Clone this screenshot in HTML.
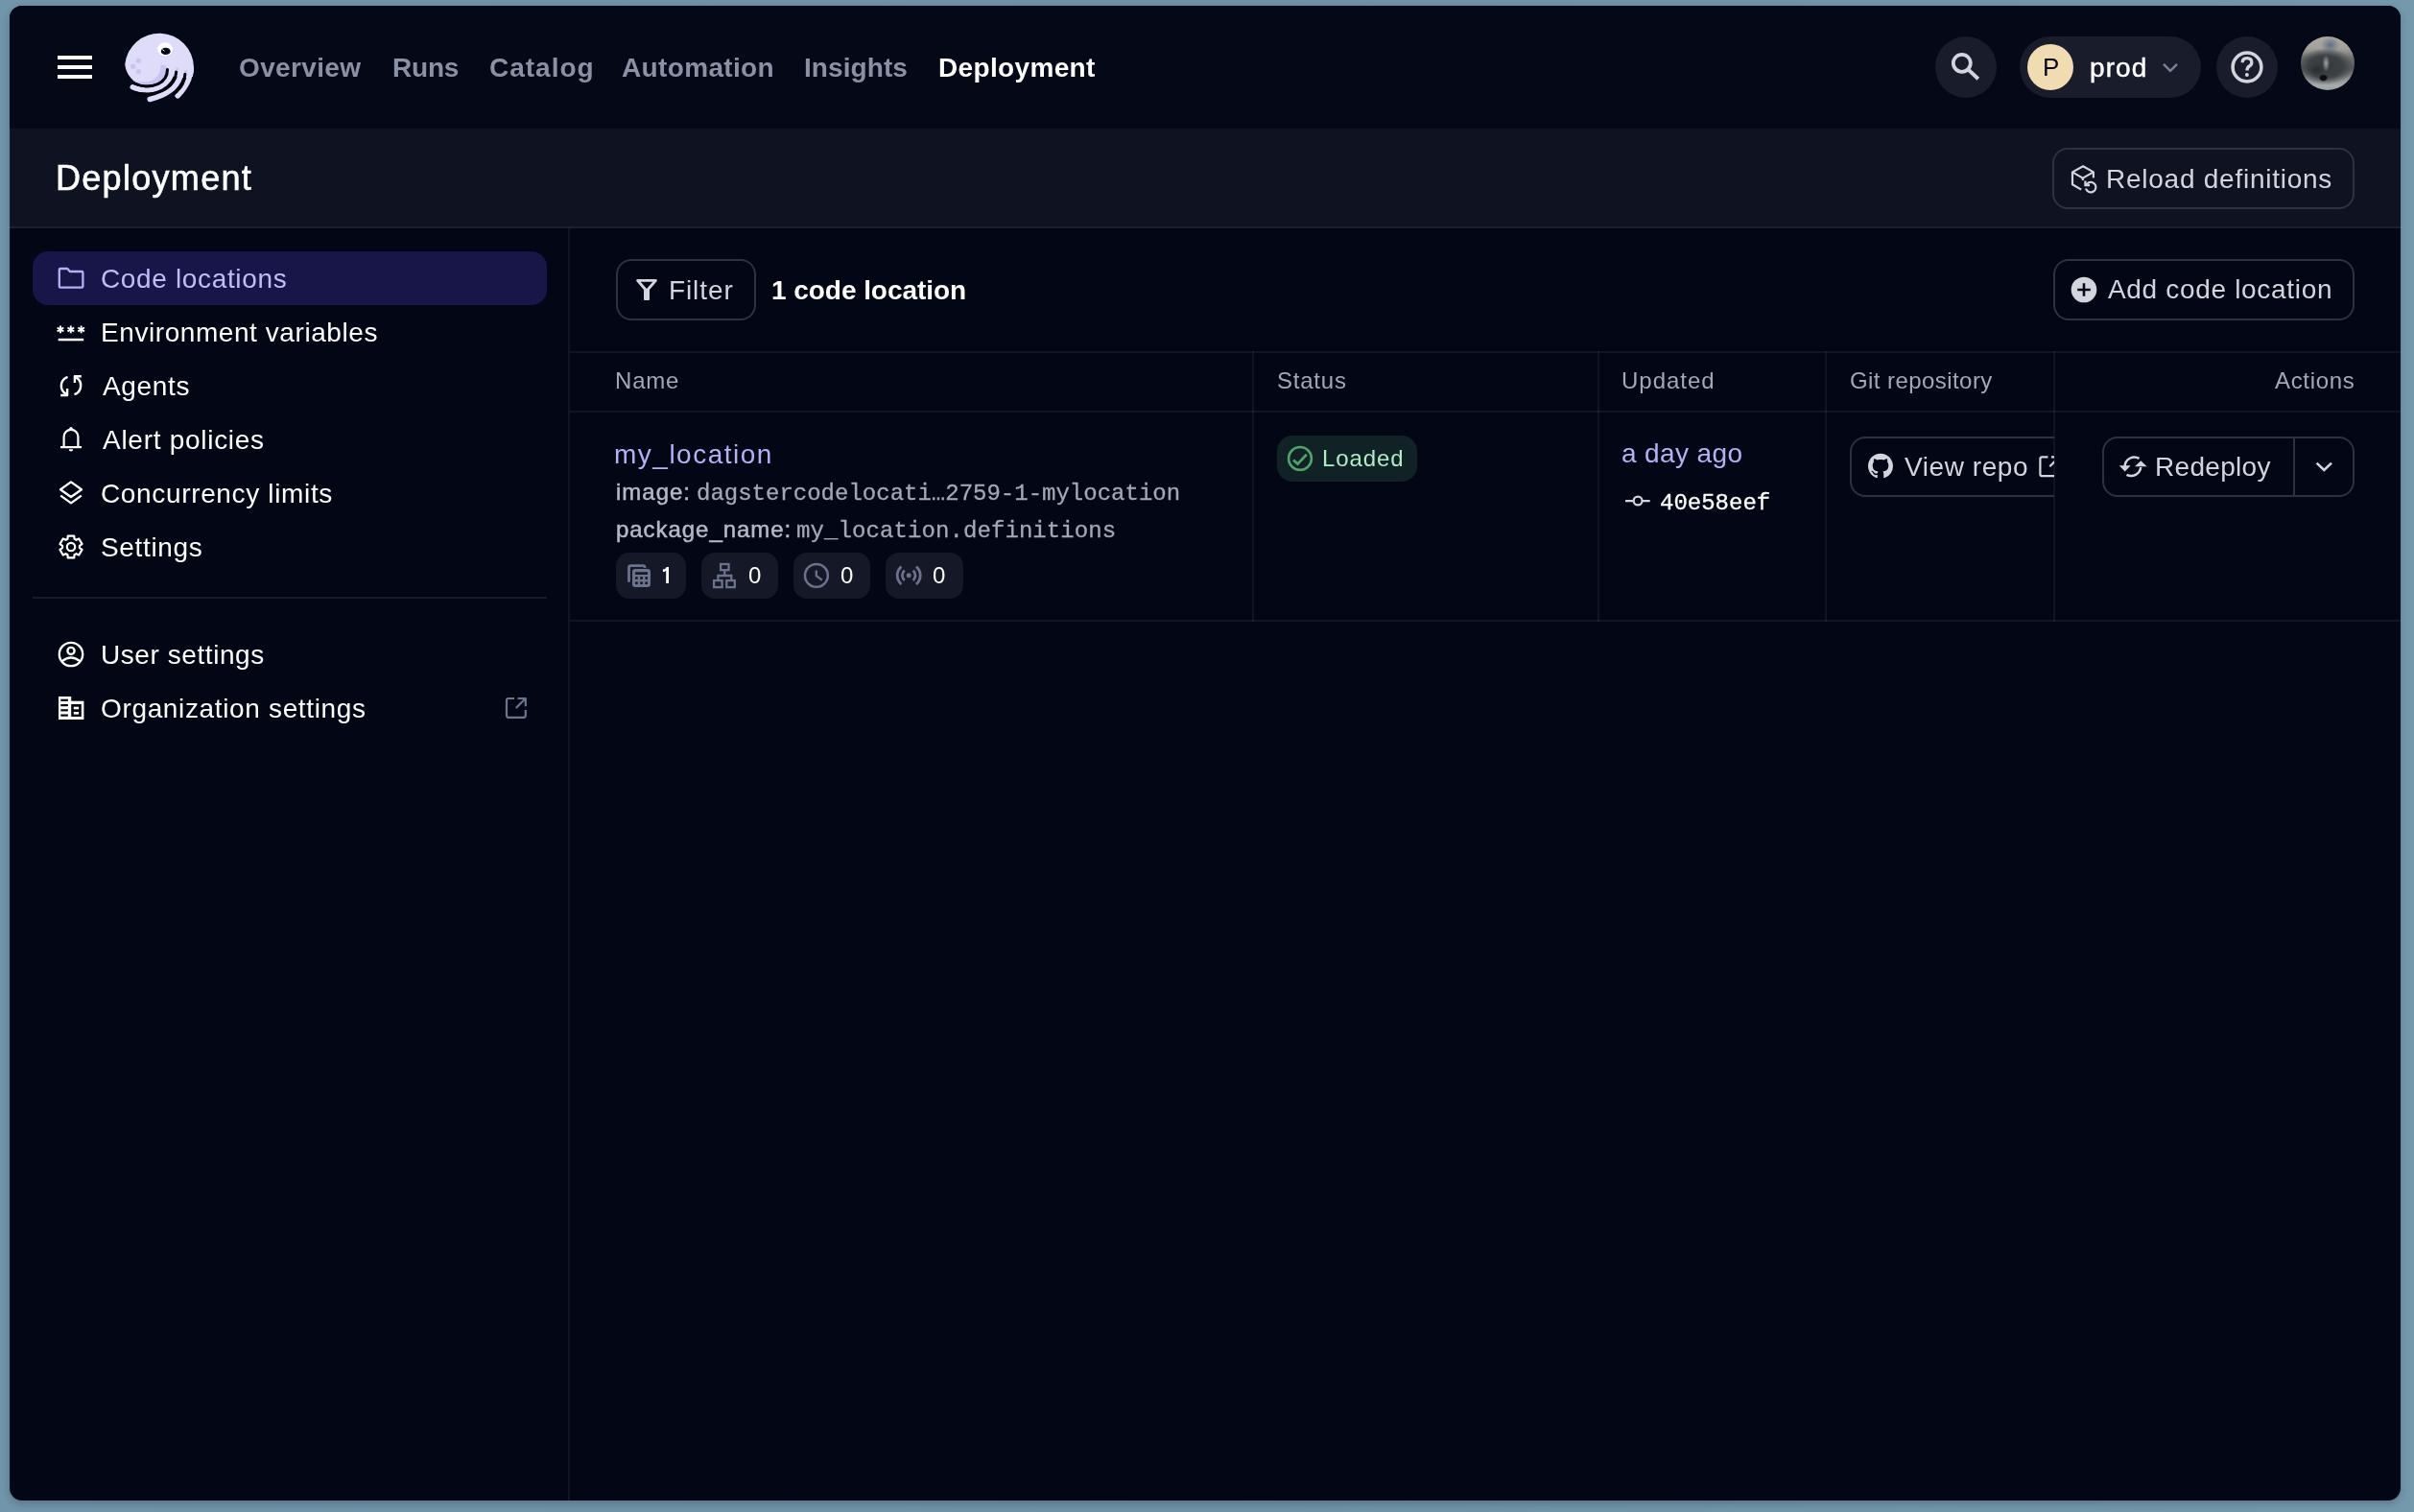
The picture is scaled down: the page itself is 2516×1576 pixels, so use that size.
<!DOCTYPE html>
<html><head><meta charset="utf-8">
<style>
*{box-sizing:border-box}
html,body{margin:0;padding:0}
body{-webkit-font-smoothing:antialiased;width:2516px;height:1576px;position:relative;overflow:hidden;background:linear-gradient(to right,#7195aa 0%,#6e92a6 50%,#7499ad 100%);font-family:"Liberation Sans",sans-serif;}
.a{position:absolute;white-space:pre;line-height:1;will-change:transform}
#win{position:absolute;left:10px;top:6px;width:2492px;height:1558px;border-radius:13px;overflow:hidden;background:#030614;box-shadow:0 3px 8px rgba(0,0,0,.22)}
#nav{position:absolute;left:0;top:0;width:2492px;height:128px;background:#050816}
#hdr{position:absolute;left:0;top:128px;width:2492px;height:104px;background:#0f1220;border-bottom:2px solid #1d1f2f}
#sbb{position:absolute;left:582px;top:232px;width:2px;height:1326px;background:#12141f}
.btn{position:absolute;border:2px solid #2c3144;border-radius:16px}
.hl{position:absolute;height:2px;background:rgba(200,210,255,.07)}
.vl{position:absolute;width:2px;background:rgba(200,210,255,.07)}
.tag{position:absolute;height:48px;border-radius:14px;background:#151826}
.ov{position:absolute;left:0;top:0}

</style></head>
<body>
<div id="win">
  <div id="nav"></div>
  <div id="hdr"></div>
  <div id="sbb"></div>
  <div class="a" style="left:0;top:128px;width:1px;height:1430px;background:rgba(200,210,255,.06)"></div>
  <div class="hl" style="left:584px;top:360px;width:1908px"></div>
  <div class="hl" style="left:584px;top:422px;width:1908px"></div>
  <div class="hl" style="left:584px;top:640px;width:1908px"></div>
  <div class="vl" style="left:1295px;top:360px;height:282px"></div>
  <div class="vl" style="left:1655px;top:360px;height:282px"></div>
  <div class="vl" style="left:1892px;top:360px;height:282px"></div>
  <div class="vl" style="left:2130px;top:360px;height:282px"></div>
</div>
<div class="a" style="left:60px;top:58px;width:36px;height:4px;background:#fff"></div>
<div class="a" style="left:60px;top:68px;width:36px;height:4px;background:#fff"></div>
<div class="a" style="left:60px;top:78px;width:36px;height:4px;background:#fff"></div>
<div class="a" style="left:249.0px;top:56.8px;font-size:28px;color:#8a91a5;font-weight:700;font-family:'Liberation Sans',sans-serif;letter-spacing:0.35px;">Overview</div>
<div class="a" style="left:409.0px;top:56.8px;font-size:28px;color:#8a91a5;font-weight:700;font-family:'Liberation Sans',sans-serif;letter-spacing:-0.2px;">Runs</div>
<div class="a" style="left:510.0px;top:56.8px;font-size:28px;color:#8a91a5;font-weight:700;font-family:'Liberation Sans',sans-serif;letter-spacing:1.0px;">Catalog</div>
<div class="a" style="left:648.0px;top:56.8px;font-size:28px;color:#8a91a5;font-weight:700;font-family:'Liberation Sans',sans-serif;letter-spacing:0.35px;">Automation</div>
<div class="a" style="left:838.0px;top:56.8px;font-size:28px;color:#8a91a5;font-weight:700;font-family:'Liberation Sans',sans-serif;letter-spacing:0.08px;">Insights</div>
<div class="a" style="left:978.3px;top:56.8px;font-size:28px;color:#fff;font-weight:700;font-family:'Liberation Sans',sans-serif;letter-spacing:0.35px;">Deployment</div>
<div class="a" style="left:58.3px;top:167.8px;font-size:36px;color:#fff;font-weight:400;font-family:'Liberation Sans',sans-serif;letter-spacing:1.3px;-webkit-text-stroke:0.6px #fff;">Deployment</div>
<div class="a" style="left:34px;top:262px;width:536px;height:56px;border-radius:16px;background:#181548"></div>
<div class="a" style="left:105.0px;top:276.6px;font-size:28px;color:#c0bcf7;font-weight:400;font-family:'Liberation Sans',sans-serif;letter-spacing:0.65px;">Code locations</div>
<div class="a" style="left:105.0px;top:332.7px;font-size:28px;color:#fff;font-weight:400;font-family:'Liberation Sans',sans-serif;letter-spacing:0.57px;">Environment variables</div>
<div class="a" style="left:106.5px;top:388.6px;font-size:28px;color:#fff;font-weight:400;font-family:'Liberation Sans',sans-serif;letter-spacing:0.65px;">Agents</div>
<div class="a" style="left:106.5px;top:444.6px;font-size:28px;color:#fff;font-weight:400;font-family:'Liberation Sans',sans-serif;letter-spacing:0.72px;">Alert policies</div>
<div class="a" style="left:105.0px;top:500.6px;font-size:28px;color:#fff;font-weight:400;font-family:'Liberation Sans',sans-serif;letter-spacing:0.65px;">Concurrency limits</div>
<div class="a" style="left:105.0px;top:556.6px;font-size:28px;color:#fff;font-weight:400;font-family:'Liberation Sans',sans-serif;letter-spacing:0.65px;">Settings</div>
<div class="a" style="left:105.0px;top:669.0px;font-size:28px;color:#fff;font-weight:400;font-family:'Liberation Sans',sans-serif;letter-spacing:0.57px;">User settings</div>
<div class="a" style="left:105.0px;top:724.9px;font-size:28px;color:#fff;font-weight:400;font-family:'Liberation Sans',sans-serif;letter-spacing:0.65px;">Organization settings</div>
<div class="a" style="left:34px;top:622px;width:536px;height:2px;background:#181b29"></div>
<div class="btn" style="left:2139px;top:154px;width:315px;height:64px"></div>
<div class="a" style="left:2195.0px;top:172.6px;font-size:28px;color:#d3d5de;font-weight:400;font-family:'Liberation Sans',sans-serif;letter-spacing:0.75px;">Reload definitions</div>
<div class="btn" style="left:2140px;top:270px;width:314px;height:64px"></div>
<div class="a" style="left:2197.0px;top:288.1px;font-size:28px;color:#d3d5de;font-weight:400;font-family:'Liberation Sans',sans-serif;letter-spacing:0.68px;">Add code location</div>
<div class="btn" style="left:642px;top:270px;width:146px;height:64px"></div>
<div class="a" style="left:697.0px;top:288.9px;font-size:28px;color:#d3d5de;font-weight:400;font-family:'Liberation Sans',sans-serif;letter-spacing:0.9px;">Filter</div>
<div class="a" style="left:804.3px;top:288.9px;font-size:28px;color:#fff;font-weight:700;font-family:'Liberation Sans',sans-serif;letter-spacing:-0.05px;">1 code location</div>
<div class="a" style="left:641.0px;top:385.4px;font-size:24px;color:#a3a7b7;font-weight:400;font-family:'Liberation Sans',sans-serif;letter-spacing:0.8px;">Name</div>
<div class="a" style="left:1330.8px;top:385.4px;font-size:24px;color:#a3a7b7;font-weight:400;font-family:'Liberation Sans',sans-serif;letter-spacing:0.78px;">Status</div>
<div class="a" style="left:1689.5px;top:385.4px;font-size:24px;color:#a3a7b7;font-weight:400;font-family:'Liberation Sans',sans-serif;letter-spacing:0.98px;">Updated</div>
<div class="a" style="left:1928.0px;top:385.4px;font-size:24px;color:#a3a7b7;font-weight:400;font-family:'Liberation Sans',sans-serif;letter-spacing:0.43px;">Git repository</div>
<div class="a" style="left:2371.0px;top:385.4px;font-size:24px;color:#a3a7b7;font-weight:400;font-family:'Liberation Sans',sans-serif;letter-spacing:0.68px;">Actions</div>
<div class="a" style="left:640.0px;top:459.5px;font-size:28px;color:#b5b0f4;font-weight:400;font-family:'Liberation Sans',sans-serif;letter-spacing:1.5px;">my_location</div>
<div class="a" style="left:642.0px;top:500.9px;font-size:24px;color:#b6bac6;font-weight:400;font-family:'Liberation Sans',sans-serif;letter-spacing:1.0px;-webkit-text-stroke:0.5px #b6bac6;">image:</div>
<div class="a" style="left:726.0px;top:502.8px;font-size:24px;color:#a3a7b7;font-weight:400;font-family:'Liberation Mono',monospace;-webkit-text-stroke:0.3px #a3a7b7;">dagstercodelocati…2759-1-mylocation</div>
<div class="a" style="left:642.0px;top:540.3px;font-size:24px;color:#b6bac6;font-weight:400;font-family:'Liberation Sans',sans-serif;letter-spacing:0.95px;-webkit-text-stroke:0.5px #b6bac6;">package_name:</div>
<div class="a" style="left:830.0px;top:542.2px;font-size:24px;color:#a3a7b7;font-weight:400;font-family:'Liberation Mono',monospace;letter-spacing:0.09px;-webkit-text-stroke:0.3px #a3a7b7;">my_location.definitions</div>
<div class="tag" style="left:642px;top:576px;width:73px"></div>
<div class="tag" style="left:731px;top:576px;width:80px"></div>
<div class="tag" style="left:827px;top:576px;width:80px"></div>
<div class="tag" style="left:923px;top:576px;width:81px"></div>
<div class="a" style="left:779.5px;top:587.7px;font-size:24px;color:#fff;font-weight:400;font-family:'Liberation Sans',sans-serif;">0</div>
<div class="a" style="left:875.5px;top:587.7px;font-size:24px;color:#fff;font-weight:400;font-family:'Liberation Sans',sans-serif;">0</div>
<div class="a" style="left:971.5px;top:587.7px;font-size:24px;color:#fff;font-weight:400;font-family:'Liberation Sans',sans-serif;">0</div>
<div class="a" style="left:1331px;top:454px;width:146px;height:48px;border-radius:16px;background:#112226"></div>
<div class="a" style="left:1378.0px;top:466.3px;font-size:24px;color:#b1ebc4;font-weight:400;font-family:'Liberation Sans',sans-serif;letter-spacing:0.9px;">Loaded</div>
<div class="a" style="left:1689.6px;top:459.3px;font-size:28px;color:#b5b0f4;font-weight:400;font-family:'Liberation Sans',sans-serif;letter-spacing:0.37px;">a day ago</div>
<div class="a" style="left:1730.0px;top:512.9px;font-size:24px;color:#fff;font-weight:400;font-family:'Liberation Mono',monospace;-webkit-text-stroke:0.3px #fff;">40e58eef</div>
<div class="a" style="left:1904px;top:440px;width:237px;height:100px;overflow:hidden"><div class="btn" style="left:24px;top:15px;width:300px;height:63px"></div></div>
<div class="a" style="left:1985.4px;top:473.1px;font-size:28px;color:#d3d5de;font-weight:400;font-family:'Liberation Sans',sans-serif;letter-spacing:0.56px;">View repo</div>
<div class="btn" style="left:2191px;top:455px;width:263px;height:63px"></div>
<div class="a" style="left:2390px;top:457px;width:2px;height:59px;background:#2c3144"></div>
<div class="a" style="left:2246.0px;top:473.1px;font-size:28px;color:#d3d5de;font-weight:400;font-family:'Liberation Sans',sans-serif;letter-spacing:0.3px;">Redeploy</div>
<div class="a" style="left:2017px;top:38px;width:64px;height:64px;border-radius:32px;background:#191c2b"></div>
<div class="a" style="left:2105px;top:38px;width:189px;height:64px;border-radius:32px;background:#191c2b"></div>
<div class="a" style="left:2113px;top:46px;width:48px;height:48px;border-radius:24px;background:#f1dcb1"></div>
<div class="a" style="left:2129.0px;top:57.0px;font-size:26px;color:#030615;font-weight:400;font-family:'Liberation Sans',sans-serif;">P</div>
<div class="a" style="left:2177.6px;top:56.6px;font-size:28px;color:#fff;font-weight:400;font-family:'Liberation Sans',sans-serif;letter-spacing:1.1px;-webkit-text-stroke:0.45px #fff;">prod</div>
<div class="a" style="left:2310px;top:38px;width:64px;height:64px;border-radius:32px;background:#191c2b"></div>
<div class="a" style="left:2398px;top:38px;width:56px;height:56px;border-radius:28px;background:radial-gradient(ellipse 5px 4px at 42% 77%,#0b0c0d 0,#0b0c0d 55%,transparent 100%),radial-gradient(ellipse 4px 9px at 47% 50%,rgba(205,205,202,.7) 0,transparent 100%),radial-gradient(ellipse 10px 6px at 30% 62%,rgba(40,42,45,.9) 0,transparent 100%),radial-gradient(ellipse 30px 19px at 46% 56%,#36393c 0,#3e4144 60%,rgba(62,65,68,0) 100%),radial-gradient(ellipse 10px 9px at 55% 16%,rgba(80,105,130,.85) 0,transparent 100%),linear-gradient(to bottom,#aca9a2 0%,#a3a19b 22%,#6e7070 40%,#5a5c5e 60%,#8f9393 78%,#a6abab 92%,#9aa0a3 100%)"></div>
<svg class="ov" width="2516" height="1576" viewBox="0 0 2516 1576">
<defs><clipPath id="cv"><rect x="1900" y="440" width="241" height="100"/></clipPath></defs>

<g transform="translate(126,30)">
  <path d="M4.2,37 A36,36 0 0 1 76,40 L75.6,46 L48.2,41.6 C47.8,44.5 47,47.2 45.5,49.5 C42,54.5 36,58 29,58.4 C24,58.6 18.5,57.6 13.5,54.2 C8,50 4.8,43 4.2,37 Z" fill="#dedcf8"/>
  <path d="M47,39 L76,39.5 L75.8,45 L74.8,50 L71.5,51 L62,51 L52,49 L47,45 Z" fill="#dedcf8"/>
  <path d="M41.5,37.5 C46,36.8 49.5,39.5 48.2,44.5 C46,52 40,57.5 29,58.4 C22,58.8 16,57 12,53.5 C17,55 22,55.5 27,55 C36,54 41,49 41.5,37.5Z" fill="#c8c5f3"/>
  <g fill="none" stroke="#dedcf8" stroke-width="5.6" stroke-linecap="round">
    <path d="M12.3,60.8 C18,63.5 24,64.3 30,64.1 C38,63.7 46,58 50,52.5 C52.5,48.5 53.5,45.5 53.5,42"/>
    <path d="M30.2,73.4 C38,71.6 45,68.8 51,64.5 C56,61 60,55 62,49.5 C62.8,47 63,45 63.2,42"/>
    <path d="M59.2,69.8 C64.3,64.5 68.4,58.5 70.7,52.5 C71.9,49 72.5,45 72.7,40"/>
  </g>
  <g fill="none" stroke="#03040c" stroke-width="3" stroke-linecap="round">
    <path d="M48.5,42.6 C48.3,50 44,55 39,57.5 C35,59.3 30,59.9 26,59.9 C22,59.8 18,58.8 14,57"/>
    <path d="M57.7,44.9 C57.5,52 53,59 47,62.5 C42,65.5 35,67.5 28,68 C24,68.2 20,68 16,67"/>
    <path d="M66.9,47.2 C66.5,54 63.5,60.5 58.5,65 L55,68"/>
  </g>
  <circle cx="58.7" cy="41.8" r="1.5" fill="#c8c5f3"/>
  <circle cx="67.7" cy="44.4" r="1.5" fill="#c8c5f3"/>
  <ellipse cx="46" cy="21.3" rx="7.8" ry="7" fill="#fff"/>
  <ellipse cx="46.7" cy="23.4" rx="4.9" ry="3.7" fill="#050816"/>
  <path d="M43.4,21.6 L45.4,23.2" stroke="#fff" stroke-width="1"/>
  <circle cx="18.3" cy="33.3" r="2.6" fill="#c8c5f3"/>
  <circle cx="12.7" cy="39.2" r="2.6" fill="#c8c5f3"/>
  <circle cx="18.3" cy="44.7" r="2.6" fill="#c8c5f3"/>
</g>
<g fill="none" stroke-linecap="butt" stroke-linejoin="round">
<path d="M61.8,281.3 Q61.8,280 63.1,280 H70.3 L72.8,283 H85.1 Q86.4,283 86.4,284.3 V298.4 Q86.4,299.7 85.1,299.7 H63.1 Q61.8,299.7 61.8,298.4 Z" stroke="#b5b0f4" stroke-width="2.3"/>
<g stroke="#fff" stroke-width="2.4"><path d="M70.5,392.8 A9.8,9.8 0 0 0 68.8,410.6"/><path d="M63.2,412 H70.1 V405"/><path d="M77.5,411.2 A9.8,9.8 0 0 0 79.2,393.4"/><path d="M84.8,392.2 H77.9 V399"/></g>
<g stroke="#fff" stroke-width="2.2"><path d="M66.6,465 V455.2 A7.4,7.4 0 0 1 81.4,455.2 V465"/><path d="M63,466.1 H85"/></g><circle cx="74" cy="446.6" r="1.7" fill="#fff"/><path d="M71.8,468.2 A2.2,2.2 0 0 0 76.2,468.2 Z" fill="#fff"/>
<g stroke="#fff" stroke-width="2.3"><path d="M74,502.4 L85,510.2 L74,518 L63,510.2 Z"/><path d="M63.2,516.6 L74,524.4 L84.8,516.6"/></g>
<path d="M70.48,561.72 L70.72,558.56 L77.28,558.56 L77.52,561.72 L79.42,562.81 L82.27,561.44 L85.55,567.12 L82.93,568.90 L82.93,571.10 L85.55,572.88 L82.27,578.56 L79.42,577.19 L77.52,578.28 L77.28,581.44 L70.72,581.44 L70.48,578.28 L68.58,577.19 L65.73,578.56 L62.45,572.88 L65.07,571.10 L65.07,568.90 L62.45,567.12 L65.73,561.44 L68.58,562.81Z" stroke="#fff" stroke-width="2.2"/><circle cx="74" cy="570" r="4.2" stroke="#fff" stroke-width="2.2"/>
<g stroke="#fff" stroke-width="2.3"><circle cx="74" cy="682" r="12.2"/><circle cx="74" cy="678.4" r="3.6"/><path d="M64.8,689.2 Q74,681.8 83.2,689.2"/></g>
<g stroke="#6b7590" stroke-width="2.2"><path d="M536,728 H530 Q528,728 528,730 V745.8 Q528,747.8 530,747.8 H545.8 Q547.8,747.8 547.8,745.8 V740"/><path d="M539.5,728 H547.8 V736.3"/><path d="M547.8,728 L537.8,738"/></g>
</g>
<line x1="63.00" y1="339.50" x2="63.00" y2="347.30" stroke="#fff" stroke-width="1.9"/><line x1="59.62" y1="341.45" x2="66.38" y2="345.35" stroke="#fff" stroke-width="1.9"/><line x1="66.38" y1="341.45" x2="59.62" y2="345.35" stroke="#fff" stroke-width="1.9"/><line x1="73.80" y1="339.50" x2="73.80" y2="347.30" stroke="#fff" stroke-width="1.9"/><line x1="70.42" y1="341.45" x2="77.18" y2="345.35" stroke="#fff" stroke-width="1.9"/><line x1="77.18" y1="341.45" x2="70.42" y2="345.35" stroke="#fff" stroke-width="1.9"/><line x1="84.60" y1="339.50" x2="84.60" y2="347.30" stroke="#fff" stroke-width="1.9"/><line x1="81.22" y1="341.45" x2="87.98" y2="345.35" stroke="#fff" stroke-width="1.9"/><line x1="87.98" y1="341.45" x2="81.22" y2="345.35" stroke="#fff" stroke-width="1.9"/><rect x="60.7" y="352.8" width="26.5" height="2.5" fill="#fff"/>
<rect x="61" y="726" width="13.2" height="24" fill="#fff"/><rect x="73.8" y="730.7" width="13.6" height="19.3" fill="#fff"/><rect x="63.3" y="728.7" width="7.6" height="2.2" fill="#050816"/><rect x="63.3" y="734" width="7.6" height="2.2" fill="#050816"/><rect x="63.3" y="739.2" width="7.6" height="2.2" fill="#050816"/><rect x="63.3" y="744.5" width="7.6" height="2.2" fill="#050816"/><rect x="74.2" y="734" width="10.6" height="13" fill="#050816"/><rect x="76.8" y="736.7" width="5.3" height="2.6" fill="#fff"/><rect x="76.8" y="742" width="5.3" height="2.6" fill="#fff"/>
<g fill="none" stroke="#d3d5de" stroke-width="2.2" stroke-linejoin="round"><path d="M2160,179.4 L2171.1,173.3 L2181.9,179.4 L2170.8,185.6 Z"/><path d="M2160,179.4 V192.2 L2169.2,197.6"/><path d="M2181.9,179.4 V185.4"/><path d="M2170.8,185.6 V188"/><path d="M2174,196.5 A5.3,5.3 0 1 0 2176.9,190.3 L2173.9,192.8"/><path d="M2173.4,188.6 V193.1 H2178" stroke-linejoin="miter"/></g>
<circle cx="2172" cy="302" r="13.3" fill="#d3d5de"/><path d="M2165.2,302 H2178.8 M2172,295.2 V308.8" stroke="#050816" stroke-width="2.6"/>
<path d="M664.6,292.4 H683.4 L674,303.2 Z" fill="none" stroke="#d3d5de" stroke-width="2.9" stroke-linejoin="round"/><rect x="671" y="301.5" width="6" height="11.5" rx="1" fill="#d3d5de"/>
<path d="M655.5,606.8 V591.6 Q655.5,589.7 657.4,589.7 H670.4 Q672,589.7 672.2,591.9" fill="none" stroke="#6b738c" stroke-width="2.8"/><rect x="659" y="593" width="19" height="19" rx="3.2" fill="#6b738c"/><rect x="662.1" y="596.3" width="12.9" height="2.6" fill="#131625"/><rect x="662.1" y="601.2" width="2.6" height="2.6" fill="#131625"/><rect x="662.1" y="606.4" width="2.6" height="2.6" fill="#131625"/><rect x="667.25" y="601.2" width="2.6" height="2.6" fill="#131625"/><rect x="667.25" y="606.4" width="2.6" height="2.6" fill="#131625"/><rect x="672.4" y="601.2" width="2.6" height="2.6" fill="#131625"/><rect x="672.4" y="606.4" width="2.6" height="2.6" fill="#131625"/><g fill="none" stroke="#6b738c" stroke-width="2.3"><rect x="751.1" y="588" width="8.4" height="6.2"/><path d="M755.3,594.2 V600 M748.4,605 V600 H762.3 V605"/><rect x="744.1" y="605.1" width="8.5" height="7"/><rect x="757.3" y="605.1" width="8.5" height="7"/><circle cx="850.9" cy="599.9" r="11.9" stroke-width="2.5"/><path d="M850.8,594.5 V600.2 L856.8,604.6"/><path d="M942.8,594.6 A6.8,6.8 0 0 0 942.8,605 M951.6,594.6 A6.8,6.8 0 0 1 951.6,605" stroke-width="2.8"/><path d="M939.5,590.6 A12,12 0 0 0 939.5,609 M954.9,590.6 A12,12 0 0 1 954.9,609" stroke-width="2.8"/></g><circle cx="947.2" cy="599.8" r="2.5" fill="#6b738c"/>
<path d="M690.9,593.3 V596.1 C692.6,596.1 693.6,595.6 694.2,594.8 V608 H697 V590.9 H694.6 C694.2,592.5 693,593.3 690.9,593.3 Z" fill="#fff"/>
<circle cx="1355" cy="477.9" r="11.9" fill="none" stroke="#4fa36b" stroke-width="2.6"/><path d="M1348,479.4 L1352.5,483.6 L1361.8,473.8" fill="none" stroke="#4fa36b" stroke-width="2.8"/>
<circle cx="1707.1" cy="522" r="4.4" fill="none" stroke="#d3d5de" stroke-width="2.2"/><path d="M1694,522.1 H1702.7 M1711.5,522.1 H1719.7" stroke="#d3d5de" stroke-width="2.4"/>
<path transform="translate(1947,472.8) scale(1.625)" d="M8 0C3.58 0 0 3.58 0 8c0 3.54 2.29 6.53 5.47 7.59.4.07.55-.17.55-.38 0-.19-.01-.82-.01-1.49-2.01.37-2.53-.49-2.69-.94-.09-.23-.48-.94-.82-1.13-.28-.15-.68-.52-.01-.53.63-.01 1.08.58 1.23.82.72 1.21 1.87.87 2.33.66.07-.52.28-.87.51-1.07-1.78-.2-3.64-.89-3.64-3.95 0-.87.31-1.59.82-2.15-.08-.2-.36-1.02.08-2.12 0 0 .67-.21 2.2.82.64-.18 1.32-.27 2-.27.68 0 1.36.09 2 .27 1.53-1.04 2.2-.82 2.2-.82.44 1.1.16 1.92.08 2.12.51.56.82 1.27.82 2.15 0 3.07-1.87 3.75-3.65 3.95.29.25.54.73.54 1.48 0 1.07-.01 1.93-.01 2.2 0 .21.15.46.55.38A8.013 8.013 0 0016 8c0-4.42-3.58-8-8-8z" fill="#d3d5de"/>
<g clip-path="url(#cv)" fill="none" stroke="#d3d5de" stroke-width="2.2"><path d="M2134.5,476.3 H2128.4 Q2126.4,476.3 2126.4,478.3 V494.2 Q2126.4,496.2 2128.4,496.2 H2144.3 Q2146.3,496.2 2146.3,494.2 V488.5"/><path d="M2138,476.3 H2146.3 V484.6"/><path d="M2146.3,476.3 L2136.3,486.3"/></g>
<g fill="none" stroke="#d3d5de" stroke-width="2.5"><path d="M2229.5,477.8 A10,10 0 0 0 2214.6,486"/><path d="M2231.2,487 A10,10 0 0 1 2216.5,494.8"/></g><path d="M2208.8,485.2 L2220.7,485.2 L2214.7,491.6 Z M2225,486.3 L2237.6,486.3 L2231.3,480.2 Z" fill="#d3d5de"/>
<path d="M2414.6,482.6 L2422.3,490 L2430,482.6" fill="none" stroke="#d3d5de" stroke-width="2.6"/>
<circle cx="2044.8" cy="65.8" r="9" fill="none" stroke="#d3d5de" stroke-width="3.7"/><path d="M2051.3,72.4 L2061.8,82.2" stroke="#d3d5de" stroke-width="3.9"/>
<path d="M2255,66.8 L2262,73.8 L2269,66.8" fill="none" stroke="#7a8195" stroke-width="2.5"/>
<circle cx="2342" cy="70" r="14.9" fill="none" stroke="#d3d5de" stroke-width="3.5"/><path d="M2337.2,65.3 Q2337.2,60.6 2342,60.6 Q2346.8,60.6 2346.8,65 Q2346.8,67.6 2344.3,69 Q2342,70.4 2342,73.6" fill="none" stroke="#d3d5de" stroke-width="3.3"/><circle cx="2341.9" cy="78.1" r="2" fill="#d3d5de"/>
</svg>
</body></html>
